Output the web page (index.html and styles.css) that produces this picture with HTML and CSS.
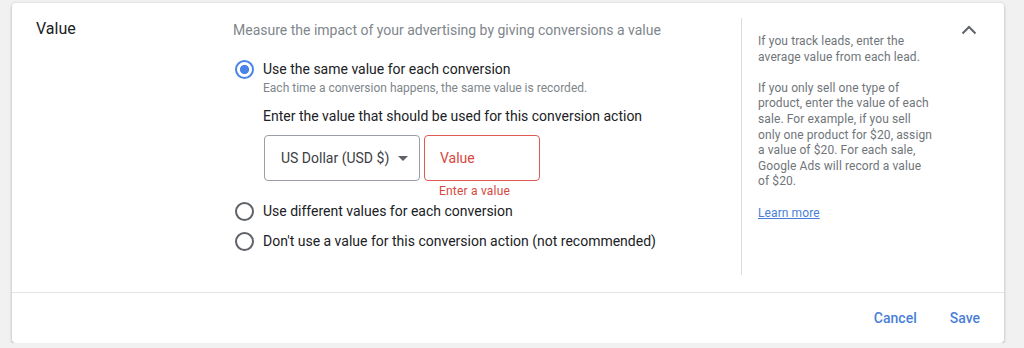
FILE: index.html
```html
<!DOCTYPE html>
<html lang="en">
<head>
<meta charset="utf-8">
<title>Value</title>
<link rel="stylesheet" href="styles.css">
</head>
<body>
<div class="card">
  <div class="main">
    <div class="label-col">
      <h2 class="heading">Value</h2>
    </div>
    <div class="content">
      <p class="desc">Measure the impact of your advertising by giving conversions a value</p>
      <div class="option first">
        <span class="radio checked"></span>
        <span class="opt-label">Use the same value for each conversion</span>
      </div>
      <div class="nested">
        <p class="sub">Each time a conversion happens, the same value is recorded.</p>
        <p class="prompt">Enter the value that should be used for this conversion action</p>
        <div class="fields">
          <div class="select">
            <span>US Dollar (USD $)</span>
            <span class="arrow"></span>
          </div>
          <div class="input-wrap">
            <div class="input">Value</div>
            <div class="error">Enter a value</div>
          </div>
        </div>
      </div>
      <div class="option second">
        <span class="radio"></span>
        <span class="opt-label">Use different values for each conversion</span>
      </div>
      <div class="option third">
        <span class="radio"></span>
        <span class="opt-label">Don't use a value for this conversion action (not recommended)</span>
      </div>
    </div>
    <div class="side">
      <div class="help">
        <p>If you track leads, enter the average value from each lead.</p>
        <p>If you only sell one type of product, enter the value of each sale. For example, if you sell only one product for $20, assign a value of $20. For each sale, Google Ads will record a value of $20.</p>
        <p><a class="learn" href="#">Learn more</a></p>
      </div>
      <div class="chevron">
        <svg width="16" height="10" viewBox="0 0 16 10"><path d="M1.5 8.5 L8 2 L14.5 8.5" fill="none" stroke="#5f6368" stroke-width="2"/></svg>
      </div>
    </div>
  </div>
  <div class="footer">
    <button class="btn">Cancel</button>
    <button class="btn">Save</button>
  </div>
</div>
</body>
</html>
```

FILE: styles.css
```css
* { box-sizing: border-box; }
html, body { margin: 0; padding: 0; }
body {
  background: #f1f1f1;
  font-family: Roboto, "Liberation Sans", Arial, sans-serif;
  color: #202124;
  padding: 3px 20px 0 12px;
}
.card {
  background: #fff;
  border-radius: 4px;
  box-shadow: 0 1px 2px rgba(60,64,67,.25), 0 1px 3px 1px rgba(60,64,67,.12);
  display: flex;
  flex-direction: column;
}
.main {
  display: grid;
  grid-template-columns: 221px 508px 1fr;
  padding: 15px 0 17px;
}
.label-col { padding: 1px 0 0 24px; }
.heading {
  margin: 0;
  font-size: 16px;
  line-height: 20px;
  font-weight: 400;
  color: #202124;
}
.content { padding: 2px 0 24px; }
p { margin: 0; }
.desc {
  font-size: 14px;
  line-height: 20px;
  color: #80868b;
}
.option {
  display: flex;
  align-items: center;
  gap: 9px;
  padding-left: 1px;
}
.option.first { margin-top: 19px; }
.option.second { margin-top: 2px; }
.option.third { margin-top: 10px; }
.radio {
  width: 20px;
  height: 20px;
  display: flex;
  align-items: center;
  justify-content: center;
  flex: none;
}
.radio::before {
  content: "";
  width: 19px;
  height: 19px;
  border: 2px solid #5f6368;
  border-radius: 50%;
  box-sizing: border-box;
}
.radio.checked::before {
  border-color: #4b84e8;
  background: radial-gradient(circle, #4b84e8 0 4.3px, #fff 4.8px);
}
.opt-label {
  font-size: 14px;
  line-height: 20px;
  color: #202124;
}
.nested { padding-left: 30px; }
.sub {
  margin-top: 1px;
  font-size: 12px;
  line-height: 16px;
  color: #80868b;
}
.prompt {
  margin-top: 10px;
  font-size: 14px;
  line-height: 20px;
  color: #202124;
}
.fields {
  margin-top: 9px;
  display: flex;
  gap: 4px;
  padding-left: 1px;
}
.select {
  width: 156px;
  height: 46px;
  border: 1px solid #9aa0a6;
  border-radius: 4px;
  display: flex;
  align-items: center;
  padding-left: 16px;
  gap: 9px;
  font-size: 14px;
  color: #3c4043;
}
.arrow {
  width: 0;
  height: 0;
  border-left: 5px solid transparent;
  border-right: 5px solid transparent;
  border-top: 5px solid #5f6368;
}
.input {
  width: 116px;
  height: 46px;
  border: 1px solid #dd5b52;
  border-radius: 4px;
  display: flex;
  align-items: center;
  padding-left: 15px;
  font-size: 14px;
  color: #d6483e;
}
.error {
  margin-top: 2px;
  padding-left: 15px;
  font-size: 12px;
  line-height: 16px;
  color: #d6483e;
  letter-spacing: 0.2px;
}
.side {
  border-left: 1px solid #dadce0;
  display: flex;
  align-items: flex-start;
  padding-left: 16px;
}
.help {
  width: 176px;
  padding-top: 16px;
  font-size: 12px;
  line-height: 15.6px;
  letter-spacing: 0.1px;
  color: #70757a;
}
.help p + p { margin-top: 15.6px; }
.learn {
  color: #4a7fd8;
  text-decoration: underline;
}
.chevron {
  margin-left: auto;
  margin-right: 27px;
  margin-top: 7px;
  line-height: 0;
  height: 10px;
}
.footer {
  border-top: 1px solid #e3e3e3;
  height: 51px;
  display: flex;
  justify-content: flex-end;
  align-items: center;
  gap: 17px;
  padding-right: 16px;
}
.btn {
  background: none;
  border: 0;
  padding: 8px;
  font-family: inherit;
  font-size: 14px;
  font-weight: 500;
  color: #4a7fd8;
  cursor: pointer;
}
```
